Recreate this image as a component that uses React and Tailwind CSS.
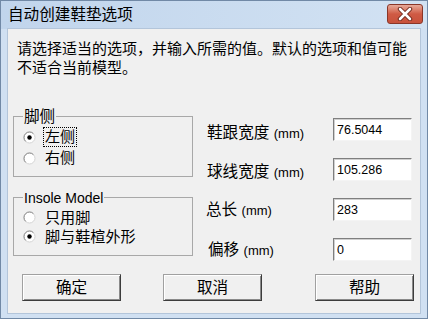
import React from 'react';

function Radio({ checked }) {
  return (
    <svg width="13" height="13" viewBox="0 0 13 13" className="shrink-0">
      <circle cx="6.5" cy="6.5" r="5.5" fill="#fff" stroke="#d4d4d4" />
      <path d="M2.6 10.4 A5.5 5.5 0 0 1 10.4 2.6" fill="none" stroke="#8c8c8c" />
      {checked && <circle cx="6.5" cy="6.5" r="2.2" fill="#000" />}
    </svg>
  );
}

function RadioRow({ label, checked, focused, h = 'h-[20px]' }) {
  return (
    <div className={`flex items-center ${h}`}>
      <Radio checked={checked} />
      <span
        className={`ml-[7px] h-[20px] px-[1px] leading-[18px] text-[15.1px] border ${
          focused ? 'border-dotted border-black' : 'border-transparent'
        }`}
      >
        {label}
      </span>
    </div>
  );
}

function GroupBox({ title, className, children }) {
  return (
    <div className={`relative border border-[#a8a8a8] pt-[10px] pl-[9px] ${className}`}>
      <span className="absolute left-[9px] -top-[10px] h-[19px] px-[1px] leading-[19px] bg-[#f0f0f0]">
        {title}
      </span>
      {children}
    </div>
  );
}

function Field({ label, value, labelClass }) {
  return (
    <div className="flex items-center justify-between h-[23px]">
      <span className={`text-[15.6px] whitespace-nowrap ${labelClass}`}>
        {label} <span className="text-[13px]">(mm)</span>
      </span>
      <input
        readOnly
        value={value}
        className="w-[79px] h-[23px] pl-[3px] text-[12.5px] bg-white outline-none border border-t-[#7f7f7f] border-l-[#7f7f7f] border-b-[#f4f4f4] border-r-[#f4f4f4] shadow-[inset_1px_1px_0_#d0d0d0] font-['Liberation_Sans',sans-serif]"
      />
    </div>
  );
}

function Button({ children, className }) {
  return (
    <button className={`w-[99px] h-[27px] text-[15.6px] bg-[#f0f0f0] border border-t-[#a0a0a0] border-l-[#a0a0a0] border-b-[#3c3c3c] border-r-[#3c3c3c] shadow-[inset_1px_1px_0_#fff,inset_-1px_-1px_0_#8a8a8a] ${className}`}>
      {children}
    </button>
  );
}

export default function App() {
  return (
    <div className="w-[428px] h-[319px] flex flex-col bg-[#d0e0f2] border border-[#7189a6] text-black select-none font-['Liberation_Sans','Noto_Sans_CJK_SC',sans-serif]">
      {/* Title bar */}
      <div className="h-[28px] flex justify-between pl-[7px] pr-[4px] bg-gradient-to-r from-[#c1d5ec] to-[#d2e2f3]">
        <span className="text-[15.6px] leading-[28px]">自动创建鞋垫选项</span>
        <div className="mt-[3px] w-[36px] h-[20px] rounded-[3px] border border-[#8a3628] bg-gradient-to-b from-[#e6a999] via-[#cf5a44] to-[#c8523c] flex items-center justify-center">
          <svg width="16" height="14" viewBox="0 0 16 14">
            <path d="M3 2 L13 12 M13 2 L3 12" stroke="#6b2418" strokeWidth="4.4" strokeLinecap="round" />
            <path d="M3 2 L13 12 M13 2 L3 12" stroke="#fff" strokeWidth="2.6" strokeLinecap="round" />
          </svg>
        </div>
      </div>

      {/* Client area */}
      <div className="flex-1 mx-[7px] mb-[5px] bg-[#f0f0f0] shadow-[0_0_0_1px_#b3c5da] flex flex-col">
        <div className="pt-[10px] pl-[9px] text-[15px] leading-[19px] whitespace-nowrap">
          <div>请选择适当的选项，并输入所需的值。默认的选项和值可能</div>
          <div>不适合当前模型。</div>
        </div>

        <div className="mt-[39px] h-[145px] flex pl-[5px] pr-[8px]">
          <div className="w-[180px] flex flex-col">
            <GroupBox title={<span className="text-[15.6px]">脚侧</span>} className="h-[61px]">
              <RadioRow label="左侧" checked focused />
              <div className="mt-[1px]">
                <RadioRow label="右侧" />
              </div>
            </GroupBox>
            <GroupBox title={<span className="text-[14px]">Insole Model</span>} className="mt-[20px] h-[59px]">
              <RadioRow label="只用脚" h="h-[19px]" />
              <RadioRow label="脚与鞋楦外形" checked h="h-[19px]" />
            </GroupBox>
          </div>

          <div className="ml-[14px] flex-1 pt-[2px] flex flex-col gap-[17px]">
            <Field label="鞋跟宽度" value="76.5044" labelClass="mt-[7px]" />
            <Field label="球线宽度" value="105.286" labelClass="mt-[5px]" />
            <Field label="总长" value="283" labelClass="-ml-[1px]" />
            <Field label="偏移" value="0" labelClass="ml-[1px]" />
          </div>
        </div>

        <div className="mt-[13px] flex pl-[14px]">
          <Button>确定</Button>
          <Button className="ml-[42px]">取消</Button>
          <Button className="ml-[53px]">帮助</Button>
        </div>
      </div>
    </div>
  );
}
